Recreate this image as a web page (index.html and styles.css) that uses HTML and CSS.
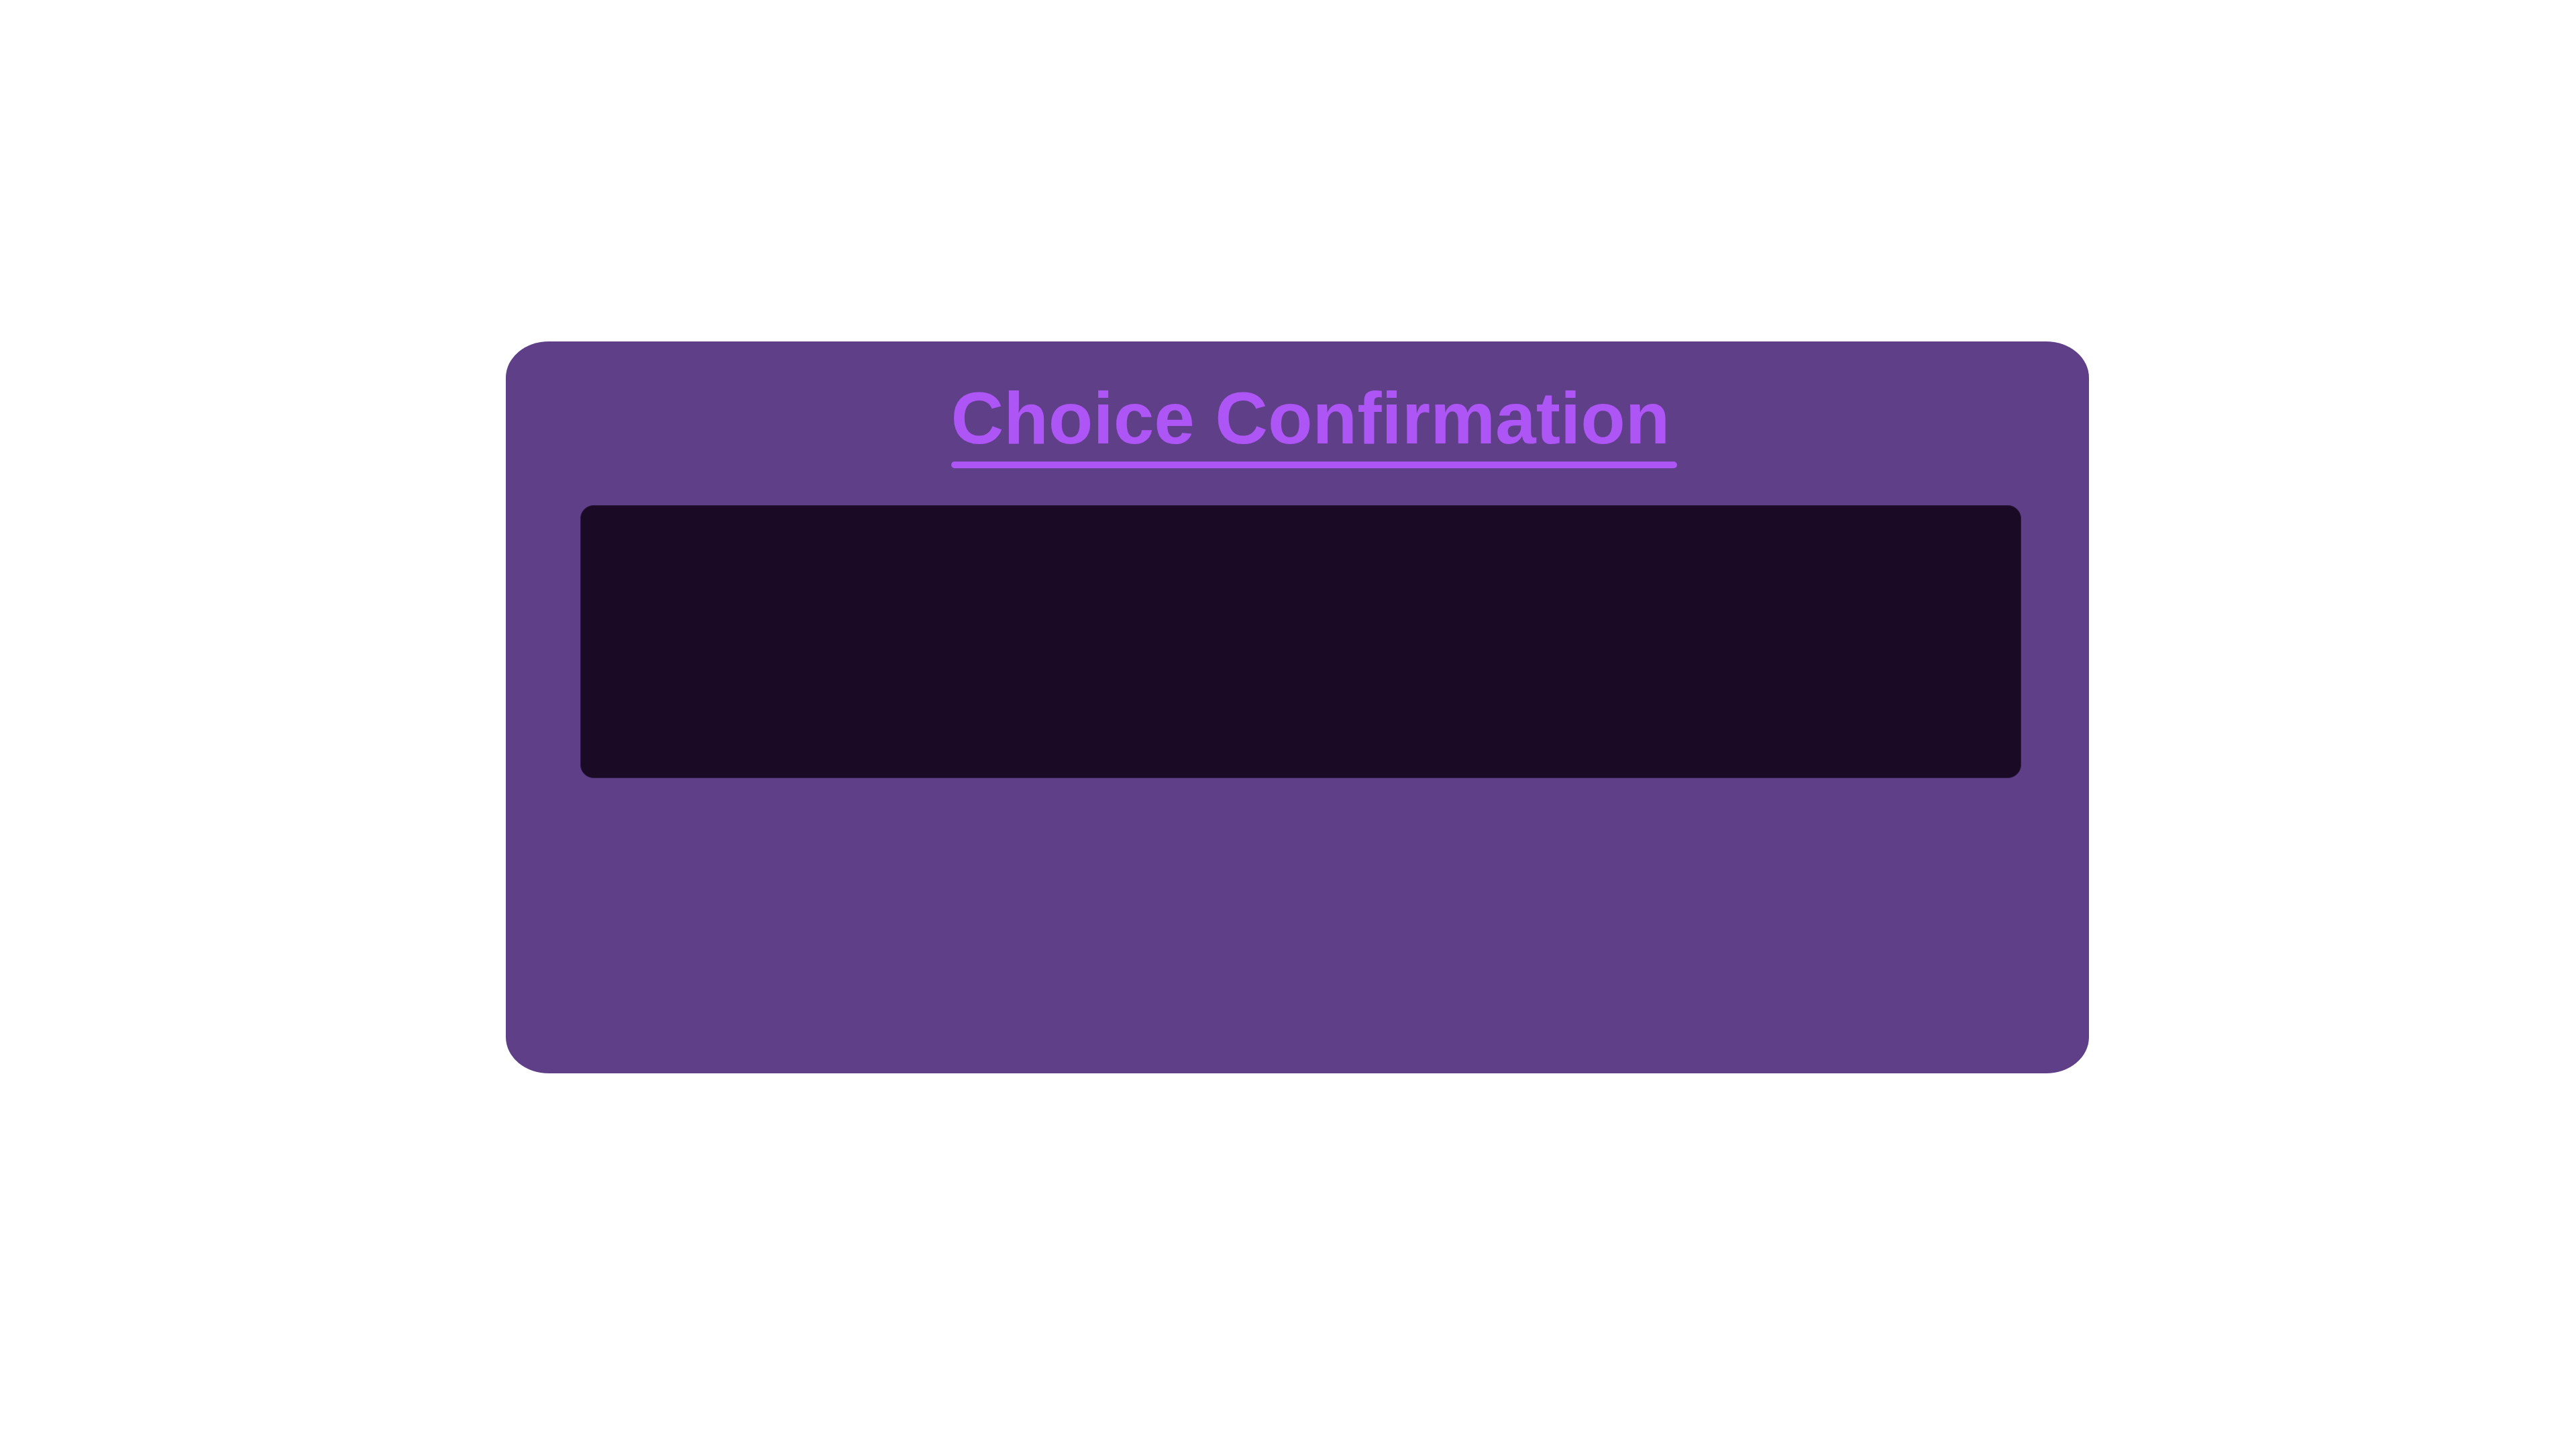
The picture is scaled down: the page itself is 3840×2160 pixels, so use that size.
FILE: index.html
```html
<!DOCTYPE html>
<html lang="en">
<head>
<meta charset="utf-8">
<title>Choice Confirmation</title>
<link rel="stylesheet" href="styles.css">
</head>
<body>
<main class="stage">
  <section class="card">
    <header class="card-header">
      <h1 class="title">Choice Confirmation</h1>
    </header>
    <div class="panel"></div>
  </section>
</main>
</body>
</html>
```

FILE: styles.css
```css
html, body {
  margin: 0;
  padding: 0;
  background: #ffffff;
}

.stage {
  width: 3840px;
  height: 2160px;
  display: flex;
  align-items: flex-start;
  justify-content: flex-start;
  padding: 509px 0 0 754px;
  box-sizing: border-box;
}

.card {
  width: 2360px;
  height: 1091px;
  box-sizing: border-box;
  background: #5e3f88;
  border-radius: 64px / 54px;
  padding: 53px 101px 0 111px;
  display: flex;
  flex-direction: column;
}

.card-header {
  display: flex;
  justify-content: center;
  padding-left: 40px;
}

.title {
  margin: 0;
  font-family: "Liberation Sans", Arial, sans-serif;
  font-weight: 700;
  font-size: 109px;
  line-height: 123px;
  color: #ae55f5;
  padding: 0 11px 13px 0;
  position: relative;
}

.title::after {
  content: "";
  position: absolute;
  left: 0;
  right: 0;
  bottom: 0;
  height: 10px;
  border-radius: 5px;
  background: #ae55f5;
}

.panel {
  margin-top: 55px;
  height: 407px;
  box-sizing: border-box;
  background: #1a0a26;
  border: 1px solid #2e1a42;
  border-radius: 20px;
}
```
